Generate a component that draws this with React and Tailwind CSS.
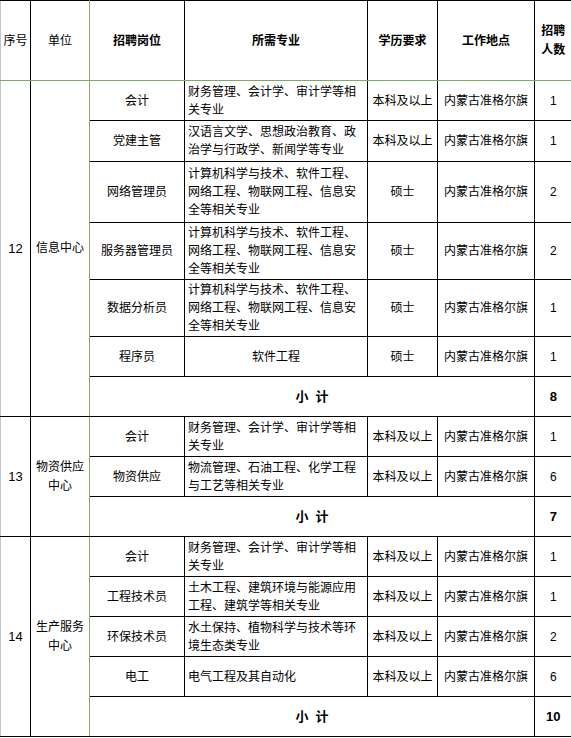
import React from "react";

const B = "border border-black";

function Row({ h, pos, major, center, edu, place = "内蒙古准格尔旗", n, first, lead }) {
  const tg = first ? "border-t-[#7fa862]" : "";
  return (
    <tr className={h}>
      {lead}
      <td className={`${B} border-l-[#8fa863] ${tg} text-center align-middle`}>{pos}</td>
      <td className={`${B} ${tg} ${center ? "text-center" : "text-left"} align-middle px-[3px] whitespace-nowrap leading-[18px]`}>
        {major.map((l, i) => (
          <div key={i}>{l}</div>
        ))}
      </td>
      <td className={`${B} ${tg} text-center align-middle whitespace-nowrap`}>{edu}</td>
      <td className={`${B} ${tg} text-center align-middle whitespace-nowrap`}>{place}</td>
      <td className={`${B} ${tg} border-r-0 text-center align-middle`}>{n}</td>
    </tr>
  );
}

function Lead({ span, no, unit, first }) {
  const tg = first ? "border-t-[#7fa862]" : "";
  return (
    <>
      <td rowSpan={span} className={`${B} border-l-[#c4c4c4] ${tg} text-center align-middle text-[13px]`}>
        {no}
      </td>
      <td rowSpan={span} className={`${B} border-r-[#8fa863] ${tg} text-center align-middle leading-[19px]`}>
        {unit.map((u, i) => (
          <div key={i}>{u}</div>
        ))}
      </td>
    </>
  );
}

function Sub({ n, h = "h-[40px]" }) {
  return (
    <tr className={h}>
      <td colSpan={4} className={`${B} border-l-[#8fa863] text-center align-middle font-bold text-[13px]`}>
        小&nbsp;&nbsp;计
      </td>
      <td className={`${B} border-r-0 text-center align-middle font-bold text-[13px]`}>{n}</td>
    </tr>
  );
}

const ACC = ["财务管理、会计学、审计学等相", "关专业"];
const CS = ["计算机科学与技术、软件工程、", "网络工程、物联网工程、信息安", "全等相关专业"];

export default function App() {
  return (
    <div className="w-[571px] h-[738px] bg-white overflow-hidden font-['Liberation_Sans','Noto_Sans_CJK_SC',sans-serif] text-[12px] text-black">
      <table className="w-[571px] table-fixed border-collapse">
        <colgroup>
          <col className="w-[30px]" />
          <col className="w-[59px]" />
          <col className="w-[95px]" />
          <col className="w-[183px]" />
          <col className="w-[70px]" />
          <col className="w-[97px]" />
          <col className="w-[37px]" />
        </colgroup>
        <thead>
          <tr className="h-[80px]">
            <th className={`${B} border-l-[#c4c4c4] border-b-[#7fa862] font-normal text-center align-middle`}>序号</th>
            <th className={`${B} border-r-[#8fa863] border-b-[#7fa862] font-normal text-center align-middle`}>单位</th>
            <th className={`${B} border-l-[#8fa863] border-b-[#7fa862] font-bold text-center align-middle`}>招聘岗位</th>
            <th className={`${B} border-b-[#7fa862] font-bold text-center align-middle`}>所需专业</th>
            <th className={`${B} border-b-[#7fa862] font-bold text-center align-middle`}>学历要求</th>
            <th className={`${B} border-b-[#7fa862] font-bold text-center align-middle`}>工作地点</th>
            <th className={`${B} border-r-0 border-b-[#7fa862] font-bold text-center align-middle leading-[19px]`}>
              <div>招聘</div>
              <div>人数</div>
            </th>
          </tr>
        </thead>
        <tbody>
          <Row
            h="h-[40px]"
            first
            lead={<Lead span={7} no="12" unit={["信息中心"]} first />}
            pos="会计"
            major={ACC}
            edu="本科及以上"
            n="1"
          />
          <Row h="h-[41px]" pos="党建主管" major={["汉语言文学、思想政治教育、政", "治学与行政学、新闻学等专业"]} edu="本科及以上" n="1" />
          <Row h="h-[61px]" pos="网络管理员" major={CS} edu="硕士" n="2" />
          <Row h="h-[57px]" pos="服务器管理员" major={CS} edu="硕士" n="2" />
          <Row h="h-[57px]" pos="数据分析员" major={CS} edu="硕士" n="1" />
          <Row h="h-[40px]" pos="程序员" major={["软件工程"]} center edu="硕士" n="1" />
          <Sub n="8" />

          <Row
            h="h-[40px]"
            lead={<Lead span={3} no="13" unit={["物资供应", "中心"]} />}
            pos="会计"
            major={ACC}
            edu="本科及以上"
            n="1"
          />
          <Row h="h-[40px]" pos="物资供应" major={["物流管理、石油工程、化学工程", "与工艺等相关专业"]} edu="本科及以上" n="6" />
          <Sub n="7" />

          <Row
            h="h-[40px]"
            lead={<Lead span={5} no="14" unit={["生产服务", "中心"]} />}
            pos="会计"
            major={ACC}
            edu="本科及以上"
            n="1"
          />
          <Row h="h-[40px]" pos="工程技术员" major={["土木工程、建筑环境与能源应用", "工程、建筑学等相关专业"]} edu="本科及以上" n="1" />
          <Row h="h-[40px]" pos="环保技术员" major={["水土保持、植物科学与技术等环", "境生态类专业"]} edu="本科及以上" n="2" />
          <Row h="h-[40px]" pos="电工" major={["电气工程及其自动化"]} edu="本科及以上" n="6" />
          <Sub n="10" />
        </tbody>
      </table>
    </div>
  );
}
